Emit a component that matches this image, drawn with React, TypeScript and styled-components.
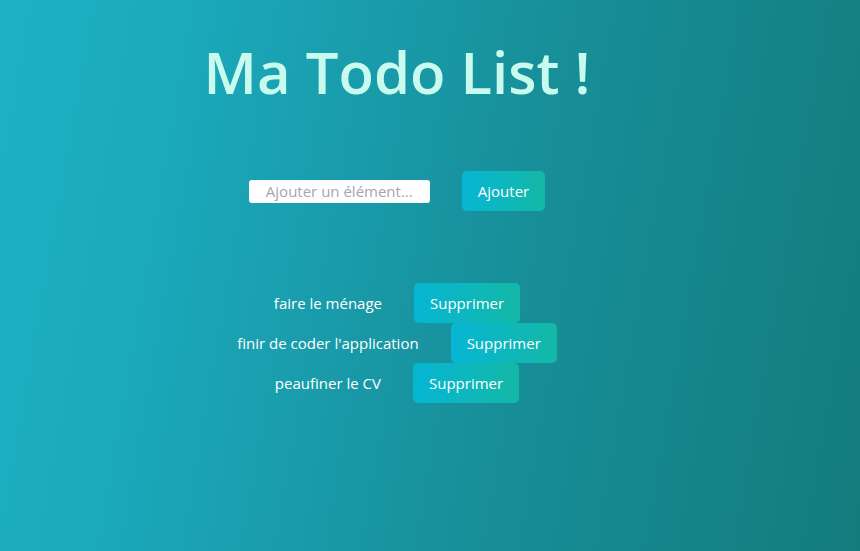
import React, { useState } from "react";
import styled, { createGlobalStyle } from "styled-components";

const GlobalStyle = createGlobalStyle`
  html, body { margin: 0; padding: 0; }
  body { font-family: "Open Sans", "Noto Sans", sans-serif; }
  * { box-sizing: border-box; }
`;

const Page = styled.div`
  min-height: 100vh;
  background: linear-gradient(100deg, #1cb1c5 0%, #1ba9bc 20%, #178e98 60%, #137c7d 100%);
  display: flex;
  justify-content: center;
  padding: 36px 66px 40px 0;
`;

const Column = styled.div`
  display: flex;
  flex-direction: column;
  align-items: center;
`;

const Title = styled.h1`
  margin: 0;
  font-size: 58px;
  line-height: 72px;
  font-weight: 600;
  color: #c8fbee;
  letter-spacing: 0;
`;

const AddRow = styled.form`
  margin-top: 63px;
  display: flex;
  align-items: center;
  gap: 32px;
`;

const TextInput = styled.input`
  width: 181px;
  height: 23px;
  border: none;
  border-radius: 3px;
  background: #ffffff;
  font-family: inherit;
  font-size: 15px;
  text-align: center;
  padding: 0 4px;
  outline: none;
  &::placeholder { color: #a9a3b3; }
`;

const GradientButton = styled.button`
  height: 40px;
  padding: 0 16px;
  border: none;
  border-radius: 5px;
  background: linear-gradient(90deg, #06b6d4, #14b8a6);
  color: #ffffff;
  font-family: inherit;
  font-size: 15px;
  cursor: pointer;
`;

const List = styled.ul`
  margin: 72px 0 0;
  padding: 0;
  list-style: none;
  display: flex;
  flex-direction: column;
  align-items: center;
`;

const Item = styled.li`
  display: flex;
  align-items: center;
  gap: 32px;
  height: 40px;
`;

const ItemText = styled.span`
  color: #ffffff;
  font-size: 15px;
`;

export default function App() {
  const [items, setItems] = useState<string[]>([
    "faire le ménage",
    "finir de coder l'application",
    "peaufiner le CV",
  ]);
  const [value, setValue] = useState("");

  const add = (e: React.FormEvent) => {
    e.preventDefault();
    if (!value.trim()) return;
    setItems([...items, value.trim()]);
    setValue("");
  };

  return (
    <>
      <GlobalStyle />
      <Page>
        <Column>
          <Title>Ma Todo List !</Title>
          <AddRow onSubmit={add}>
            <TextInput
              placeholder="Ajouter un élément..."
              value={value}
              onChange={(e) => setValue(e.target.value)}
            />
            <GradientButton type="submit">Ajouter</GradientButton>
          </AddRow>
          <List>
            {items.map((it, i) => (
              <Item key={i}>
                <ItemText>{it}</ItemText>
                <GradientButton
                  type="button"
                  onClick={() => setItems(items.filter((_, j) => j !== i))}
                >
                  Supprimer
                </GradientButton>
              </Item>
            ))}
          </List>
        </Column>
      </Page>
    </>
  );
}
